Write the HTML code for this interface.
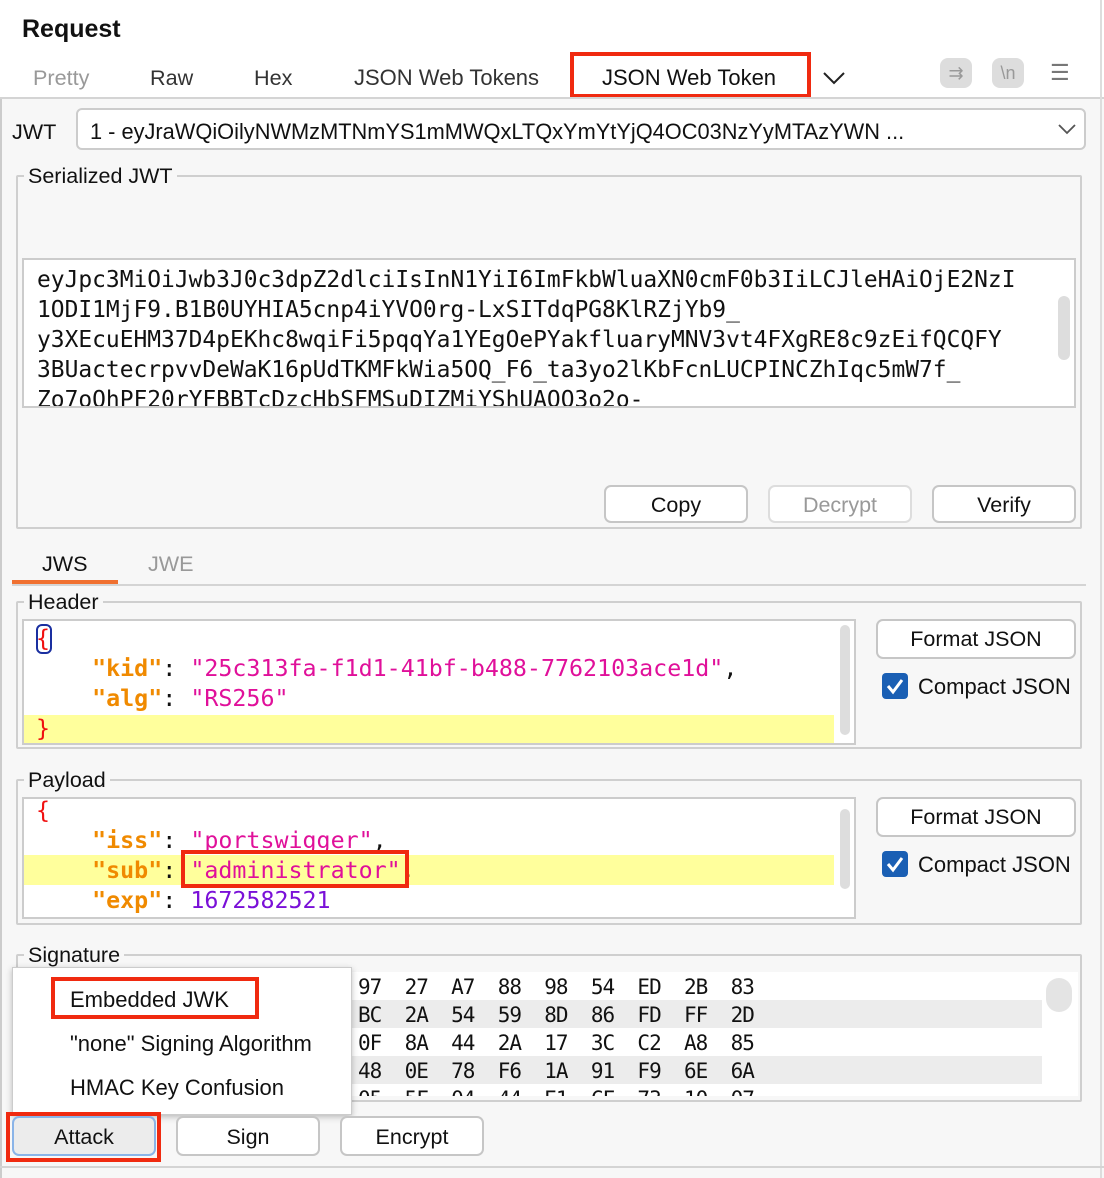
<!DOCTYPE html>
<html><head><meta charset="utf-8"><style>
*{box-sizing:border-box;margin:0;padding:0}
body{width:1104px;height:1178px;background:#f7f7f7;font-family:"Liberation Sans",sans-serif;color:#111;position:relative;overflow:hidden}
.a{position:absolute}
.mono{font-family:"DejaVu Sans Mono","Liberation Mono",monospace}
.fs{border:2px solid #cfcfcf;border-radius:2px}
.lg{position:absolute;background:#f7f7f7;padding:0 4px;font-size:21.5px;color:#111;line-height:24px}
.btn{position:absolute;background:#fff;border:2px solid #c6c6c6;border-radius:7px;font-size:21.5px;text-align:center;line-height:34px}
.red{position:absolute;border:4px solid #f02a10}
.k{color:#f08a00;font-weight:bold}.s{color:#e0109a}.n{color:#7a10d8}.b{color:#f01010}
.cb{position:absolute;width:26px;height:26px;background:#1a5fb4;border-radius:4px}
.t{font-size:21.6px}
</style></head><body>
<div class="a" style="left:0;top:0;width:1104px;height:98px;background:#fff"></div>
<div class="a" style="left:22px;top:15px;font-size:25px;font-weight:bold">Request</div>
<div class="a t" style="left:33px;top:65px;color:#999">Pretty</div>
<div class="a t" style="left:150px;top:65px;color:#333">Raw</div>
<div class="a t" style="left:254px;top:65px;color:#333">Hex</div>
<div class="a t" style="left:354px;top:65px;color:#333;font-size:22px">JSON Web Tokens</div>
<div class="a t" style="left:602px;top:65px;color:#111;font-size:22px">JSON Web Token</div>
<div class="red" style="left:570px;top:52px;width:241px;height:46px"></div>
<svg class="a" style="left:822px;top:70px" width="24" height="16"><path d="M2 3 L12 13 L22 3" stroke="#222" stroke-width="2" fill="none"/></svg>
<div class="a" style="left:940px;top:58px;width:32px;height:30px;background:#ddd;border-radius:8px;color:#999;font-size:18px;text-align:center;line-height:30px">⇉</div>
<div class="a" style="left:992px;top:58px;width:32px;height:30px;background:#ddd;border-radius:8px;color:#999;font-size:18px;text-align:center;line-height:30px">\n</div>
<div class="a" style="left:1050px;top:60px;font-size:22px;color:#777">☰</div>
<div class="a" style="left:0;top:97px;width:1104px;height:2px;background:#d4d4d4"></div>
<div class="a" style="left:0;top:99px;width:2px;height:1079px;background:#ccc"></div>
<div class="a" style="left:1100px;top:0;width:2px;height:1178px;background:#ddd"></div>

<div class="a t" style="left:12px;top:119px">JWT</div>
<div class="a" style="left:76px;top:108px;width:1010px;height:42px;background:#fff;border:2px solid #ccc;border-radius:6px"></div>
<div class="a" style="left:90px;top:119px;font-size:21.8px">1 - eyJraWQiOilyNWMzMTNmYS1mMWQxLTQxYmYtYjQ4OC03NzYyMTAzYWN ...</div>
<svg class="a" style="left:1057px;top:122px" width="20" height="14"><path d="M2 3 L10 11 L18 3" stroke="#555" stroke-width="1.8" fill="none"/></svg>

<div class="a fs" style="left:16px;top:175px;width:1066px;height:354px"></div>
<div class="lg" style="left:24px;top:164px">Serialized JWT</div>
<div class="a mono" style="left:22px;top:258px;width:1054px;height:150px;background:#fff;border:2px solid #ccc;overflow:hidden;padding:5px 0 0 13px;font-size:22.9px;line-height:30px;white-space:pre;color:#111">eyJpc3MiOiJwb3J0c3dpZ2dlciIsInN1YiI6ImFkbWluaXN0cmF0b3IiLCJleHAiOjE2NzI
1ODI1MjF9.B1B0UYHIA5cnp4iYVO0rg-LxSITdqPG8KlRZjYb9_
y3XEcuEHM37D4pEKhc8wqiFi5pqqYa1YEgOePYakfluaryMNV3vt4FXgRE8c9zEifQCQFY
3BUactecrpvvDeWaK16pUdTKMFkWia5OQ_F6_ta3yo2lKbFcnLUCPINCZhIqc5mW7f_
Zo7oOhPF20rYFBBTcDzcHbSFMSuDIZMiYShUAOO3o2o-</div>
<div class="a" style="left:1058px;top:296px;width:12px;height:64px;background:#ddd;border-radius:6px"></div>
<div class="btn" style="left:604px;top:485px;width:144px;height:38px;line-height:36px">Copy</div>
<div class="btn" style="left:768px;top:485px;width:144px;height:38px;line-height:36px;color:#999;border-color:#ddd">Decrypt</div>
<div class="btn" style="left:932px;top:485px;width:144px;height:38px;line-height:36px">Verify</div>

<div class="a t" style="left:42px;top:551px">JWS</div>
<div class="a t" style="left:148px;top:551px;color:#999">JWE</div>
<div class="a" style="left:12px;top:584px;width:1074px;height:2px;background:#d4d4d4"></div>
<div class="a" style="left:12px;top:580px;width:106px;height:4px;background:#f07030"></div>

<div class="a fs" style="left:16px;top:601px;width:1066px;height:148px"></div>
<div class="lg" style="left:24px;top:590px">Header</div>
<div class="a mono" style="left:22px;top:619px;width:834px;height:126px;background:#fff;border:2px solid #ccc;overflow:hidden;font-size:23.3px;line-height:30px;white-space:pre">
<div class="a" style="left:0;top:94px;width:810px;height:30px;background:#ffff9c"></div>
<div class="a" style="left:12px;top:3px;width:16px;height:30px;border:2px solid #1a2fa0;border-radius:6px"></div>
<div class="a" style="left:12px;top:3px"><span class="b">{</span>
    <span class="k">"kid"</span>: <span class="s">"25c313fa-f1d1-41bf-b488-7762103ace1d"</span>,
    <span class="k">"alg"</span>: <span class="s">"RS256"</span>
<span class="b">}</span></div>
<div class="a" style="left:816px;top:4px;width:10px;height:110px;background:#ddd;border-radius:5px"></div>
</div>
<div class="btn" style="left:876px;top:619px;width:200px;height:40px;line-height:36px">Format JSON</div>
<div class="cb" style="left:882px;top:673px"></div>
<svg class="a" style="left:882px;top:673px" width="26" height="26"><path d="M6 13 L11 19 L20 7" stroke="#fff" stroke-width="3" fill="none"/></svg>
<div class="a" style="left:918px;top:674px;font-size:22px">Compact JSON</div>

<div class="a fs" style="left:16px;top:779px;width:1066px;height:146px"></div>
<div class="lg" style="left:24px;top:768px">Payload</div>
<div class="a mono" style="left:22px;top:797px;width:834px;height:122px;background:#fff;border:2px solid #ccc;overflow:hidden;font-size:23.3px;line-height:30px;white-space:pre">
<div class="a" style="left:0;top:56px;width:810px;height:30px;background:#ffff9c"></div>
<div class="a" style="left:12px;top:-3px"><span class="b">{</span>
    <span class="k">"iss"</span>: <span class="s">"portswigger"</span>,
    <span class="k">"sub"</span>: <span class="s">"administrator"</span>,
    <span class="k">"exp"</span>: <span class="n">1672582521</span></div>
<div class="a" style="left:816px;top:10px;width:10px;height:80px;background:#ddd;border-radius:5px"></div>
</div>
<div class="red" style="left:181px;top:850px;width:228px;height:38px"></div>
<div class="btn" style="left:876px;top:797px;width:200px;height:40px;line-height:36px">Format JSON</div>
<div class="cb" style="left:882px;top:851px"></div>
<svg class="a" style="left:882px;top:851px" width="26" height="26"><path d="M6 13 L11 19 L20 7" stroke="#fff" stroke-width="3" fill="none"/></svg>
<div class="a" style="left:918px;top:852px;font-size:22px">Compact JSON</div>

<div class="a fs" style="left:16px;top:954px;width:1066px;height:148px"></div>
<div class="lg" style="left:24px;top:943px">Signature</div>
<div class="a" style="left:22px;top:972px;width:1056px;height:124px;background:#fff;overflow:hidden">
<div class="a" style="left:0;top:28px;width:1020px;height:28px;background:#ececec"></div>
<div class="a" style="left:0;top:84px;width:1020px;height:28px;background:#ececec"></div>
<div class="a mono" style="left:336px;top:1px;font-size:21px;letter-spacing:-1px;line-height:28px;white-space:pre">97  27  A7  88  98  54  ED  2B  83
BC  2A  54  59  8D  86  FD  FF  2D
0F  8A  44  2A  17  3C  C2  A8  85
48  0E  78  F6  1A  91  F9  6E  6A
05  5F  04  44  E1  CF  73  10  07</div>
<div class="a" style="left:1024px;top:6px;width:26px;height:34px;background:#e4e4e4;border-radius:13px"></div>
</div>
<div class="a" style="left:12px;top:967px;width:340px;height:148px;background:#fff;border:1px solid #ccc;box-shadow:0 2px 6px rgba(0,0,0,.25)"></div>
<div class="a" style="left:70px;top:987px;font-size:22px">Embedded JWK</div>
<div class="red" style="left:51px;top:977px;width:208px;height:42px"></div>
<div class="a" style="left:70px;top:1031px;font-size:22px">"none" Signing Algorithm</div>
<div class="a" style="left:70px;top:1075px;font-size:22px">HMAC Key Confusion</div>

<div class="btn" style="left:12px;top:1116px;width:144px;height:40px;background:#ececec;border-color:#8ab4e8;line-height:38px">Attack</div>
<div class="red" style="left:6px;top:1112px;width:155px;height:50px"></div>
<div class="btn" style="left:176px;top:1116px;width:144px;height:40px;line-height:38px">Sign</div>
<div class="btn" style="left:340px;top:1116px;width:144px;height:40px;line-height:38px">Encrypt</div>
<div class="a" style="left:0;top:1166px;width:1104px;height:2px;background:#d4d4d4"></div>
</body></html>
